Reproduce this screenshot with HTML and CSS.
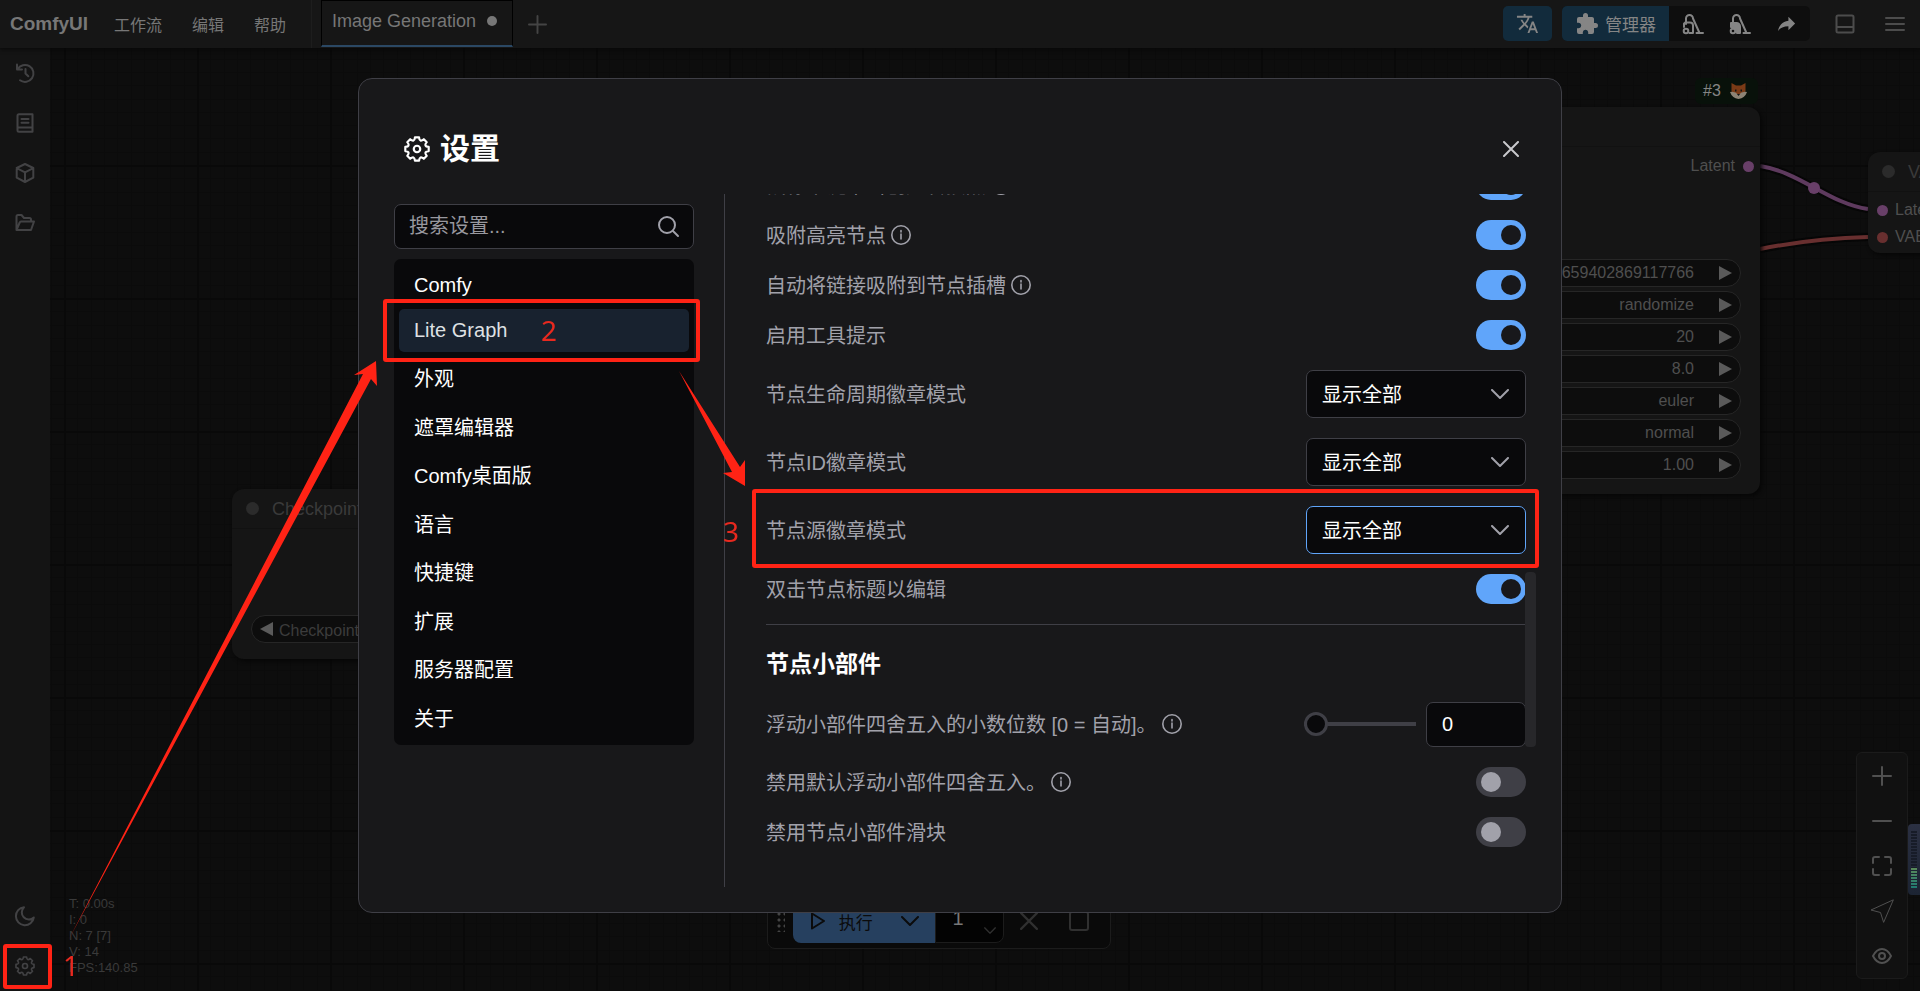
FILE: index.html
```html
<!DOCTYPE html>
<html lang="zh-CN">
<head>
    <meta charset="UTF-8">
    <meta name="viewport" content="width=device-width, initial-scale=1.0">
    <title>ComfyUI</title>
    <link rel="stylesheet" href="styles.css">
</head>
<body>
    <svg class="defs" aria-hidden="true">
        <symbol id="gear" viewBox="0 0 24 24">
            <path d="M10.1 1.2H13.9Q14.4 6.3 18.3 3L21 5.7Q17.7 9.6 22.8 10.1V13.9Q17.7 14.4 21 18.3L18.3 21Q14.4 17.7 13.9 22.8H10.1Q9.6 17.7 5.7 21L3 18.3Q6.3 14.4 1.2 13.9V10.1Q6.3 9.6 3 5.7L5.7 3Q9.6 6.3 10.1 1.2Z"/>
            <circle cx="12" cy="12" r="3"/>
        </symbol>
        <symbol id="info" viewBox="0 0 20 20">
            <circle cx="10" cy="10" r="9.2"/>
            <path d="M10 9V14M10 5.6V7"/>
        </symbol>
        <symbol id="chevron" viewBox="0 0 18 10">
            <path d="M1 1L9 9L17 1"/>
        </symbol>
        <symbol id="plus" viewBox="0 0 20 20">
            <path d="M10 1V19M1 10H19"/>
        </symbol>
        <symbol id="cross" viewBox="0 0 16 16">
            <path d="M1 1L15 15M15 1L1 15"/>
        </symbol>
    </svg>

    <div class="app">
        <header class="topbar">
            <h1 class="brand">ComfyUI</h1>
            <nav class="menu">
                <button>工作流</button>
                <button>编辑</button>
                <button>帮助</button>
            </nav>
            <div class="tabs">
                <button class="tab">Image Generation <span class="tab-dot"></span></button>
                <button class="tab-add" aria-label="新建"><svg class="icon" width="19" height="19"><use href="#plus"/></svg></button>
            </div>
            <div class="tools">
                <button class="tool-blue tool-lang" aria-label="翻译">
                    <svg class="solid" width="23" height="23" viewBox="0 0 24 24"><path d="M12.87,15.07L10.33,12.56L10.36,12.53C12.1,10.59 13.34,8.36 14.07,6H17V4H10V2H8V4H1V6H12.17C11.5,7.92 10.44,9.75 9,11.35C8.07,10.32 7.3,9.19 6.69,8H4.69C5.42,9.63 6.42,11.17 7.67,12.56L2.58,17.58L4,19L9,14L12.11,17.11L12.87,15.07M18.5,10H16.5L12,22H14L15.12,19H19.87L21,22H23L18.5,10M15.88,17L17.5,12.67L19.12,17H15.88Z"/></svg>
                </button>
                <div class="tool-group">
                    <button class="tool-blue tool-manager">
                        <svg class="solid" width="24" height="24" viewBox="0 0 24 24"><path d="M20.5,11H19V7C19,5.89 18.1,5 17,5H13V3.5A2.5,2.5 0 0,0 10.5,1A2.5,2.5 0 0,0 8,3.5V5H4A2,2 0 0,0 2,7V10.8H3.5C5,10.8 6.2,12 6.2,13.5C6.2,15 5,16.2 3.5,16.2H2V20A2,2 0 0,0 4,22H7.8V20.5C7.8,19 9,17.8 10.5,17.8C12,17.8 13.2,19 13.2,20.5V22H17A2,2 0 0,0 19,20V16H20.5A2.5,2.5 0 0,0 23,13.5A2.5,2.5 0 0,0 20.5,11Z"/></svg>
                        管理器
                    </button>
                    <button aria-label="卸载模型">
                        <svg class="icon" width="22" height="22" viewBox="0 0 22 22"><path d="M4 11V5.500A3.500 3.500 0 0 1 11 5.500L17.500 20M14.500 20H21M3 9.500H8A3 3 0 0 1 11 12.500V20H7.500M2 14V10.500"/><circle cx="4" cy="18" r="2.300"/></svg>
                    </button>
                    <button aria-label="清理缓存">
                        <svg class="icon" width="22" height="22" viewBox="0 0 22 22"><path d="M4 9V5.500A3.500 3.500 0 0 1 11 5.500L17.500 20M14.500 20H21"/><path class="fill" d="M2 10H7.500A3.500 3.500 0 0 1 11 13.500V20H8Q8 14.500 2 14Z"/><circle cx="4" cy="18" r="2.300"/></svg>
                    </button>
                    <button aria-label="分享">
                        <svg class="solid" width="23" height="23" viewBox="0 0 24 24"><path d="M21,12L14,5V9C7,10 4,15 3,20C5.5,16.5 9,14.9 14,14.9V19L21,12Z"/></svg>
                    </button>
                </div>
                <button class="tool-plain" aria-label="底部面板">
                    <svg class="icon" width="20" height="20" viewBox="0 0 20 20"><rect x="1.500" y="1.500" width="17" height="17" rx="1.500"/><path d="M2 13H18"/></svg>
                </button>
                <button class="tool-plain" aria-label="菜单">
                    <svg class="icon" width="22" height="16" viewBox="0 0 22 16"><path d="M2 2H20M2 8H20M2 14H20"/></svg>
                </button>
            </div>
        </header>

        <aside class="sidebar">
            <button aria-label="历史"><svg class="icon" width="20" height="20" viewBox="0 0 20 20"><path d="M2 1.500V6.500H7M2.600 6.200A8.500 8.500 0 1 1 5 17.300M10.500 6V10.500L13.300 13.300"/></svg></button>
            <button aria-label="节点库"><svg class="icon" width="20" height="20" viewBox="0 0 20 20"><path d="M4 1.200H17.500V18.800H4A1.500 1.500 0 0 1 2.500 17.300V2.700A1.500 1.500 0 0 1 4 1.200ZM3 14.500H17M6.500 6H13.500M6.500 9.700H13.500"/></svg></button>
            <button aria-label="模型库"><svg class="icon" width="20" height="20" viewBox="0 0 20 20"><path d="M10 1L18.300 5V14.700L10 19L1.700 14.700V5ZM1.700 5.200L10 9.300L18.300 5.200M10 9.300V19"/></svg></button>
            <button aria-label="工作流"><svg class="icon" width="20" height="20" viewBox="0 0 20 20"><path d="M1.500 17V3.500A1.500 1.500 0 0 1 3 2H6.500L9 5H14.500A1.500 1.500 0 0 1 16 6.500V8.500M1.500 17L4.700 9.500A1.500 1.500 0 0 1 6 8.500H19L16 17Z"/></svg></button>
            <span class="spacer"></span>
            <button aria-label="主题"><svg class="icon" width="20" height="20" viewBox="0 0 20 20"><path d="M9 1.200A9 9 0 1 0 18.800 11.500A7 7 0 0 1 9 1.200Z"/></svg></button>
            <button aria-label="设置"><svg class="icon" width="20" height="20"><use href="#gear"/></svg></button>
        </aside>

        <main class="canvas">
            <svg class="links" width="240" height="160" viewBox="0 0 240 160">
                <g class="link-shadow"><path d="M20 46C60 52 90 84 128 89"/><path d="M20 129C55 122 90 118 128 117"/></g>
                <path class="latent" d="M20 46C60 52 90 84 128 89"/>
                <circle class="latent-dot" cx="74" cy="68" r="6"/>
                <path class="vae" d="M20 129C55 122 90 118 128 117"/>
            </svg>

            <section class="node node-checkpoint">
                <h3><i class="dot"></i>Checkpoint加载器（简易）</h3>
                <div class="widget"><span class="arrow-left"></span>Checkpoint名称</div>
            </section>

            <div class="badge">#3
                <svg width="17" height="16" viewBox="0 0 17 16"><path fill="#7a3a16" d="M1.500 0L6 2.500H11L15.500 0V8L13 14H4L1.500 8Z"/><path fill="#8d8375" d="M0 9Q5 8 8.500 12Q12 8 17 9Q15 15 8.500 16Q2 15 0 9Z"/><path fill="#141414" d="M5 6.500H6.500V8.500H5ZM10.500 6.500H12V8.500H10.500ZM7 11H10L8.500 13Z"/></svg>
            </div>
            <section class="node node-sampler">
                <h3></h3>
                <p class="output">Latent <i class="slot slot-latent"></i></p>
                <div class="widgets">
                    <div class="widget">659402869117766<span class="arrow-right"></span></div>
                    <div class="widget">randomize<span class="arrow-right"></span></div>
                    <div class="widget">20<span class="arrow-right"></span></div>
                    <div class="widget">8.0<span class="arrow-right"></span></div>
                    <div class="widget">euler<span class="arrow-right"></span></div>
                    <div class="widget">normal<span class="arrow-right"></span></div>
                    <div class="widget">1.00<span class="arrow-right"></span></div>
                </div>
            </section>

            <section class="node node-vae">
                <h3><i class="dot"></i>VAE解码</h3>
                <p class="input"><i class="slot slot-latent"></i>Latent</p>
                <p class="input"><i class="slot slot-vae"></i>VAE</p>
            </section>

            <div class="stats">T: 0.00s<br>I: 0<br>N: 7 [7]<br>V: 14<br>FPS:140.85</div>

            <div class="run-bar">
                <span class="grip"></span>
                <button class="run">
                    <svg class="icon" width="16" height="18" viewBox="0 0 16 18"><path d="M2 1.500L14 9L2 16.500Z"/></svg>
                    执行
                    <svg class="icon run-more" width="18" height="10"><use href="#chevron"/></svg>
                </button>
                <div class="batch">
                    <input type="text" value="1" aria-label="批次数">
                    <svg class="icon" width="12" height="7"><use href="#chevron"/></svg>
                </div>
                <button class="run-icon" aria-label="取消"><svg class="icon" width="18" height="18"><use href="#cross"/></svg></button>
                <button class="run-icon" aria-label="停止"><svg class="icon" width="20" height="20" viewBox="0 0 20 20"><rect x="1" y="1" width="18" height="18" rx="2"/></svg></button>
            </div>

            <div class="zoom-bar">
                <button aria-label="放大"><svg class="icon" width="20" height="20"><use href="#plus"/></svg></button>
                <button aria-label="缩小"><svg class="icon" width="20" height="20" viewBox="0 0 20 20"><path d="M1 10H19"/></svg></button>
                <button aria-label="适应视图"><svg class="icon" width="20" height="20" viewBox="0 0 20 20"><path d="M1 7V3A2 2 0 0 1 3 1H7M13 1H17A2 2 0 0 1 19 3V7M19 13V17A2 2 0 0 1 17 19H13M7 19H3A2 2 0 0 1 1 17V13"/></svg></button>
                <button aria-label="平移"><svg class="icon thin" width="24" height="24" viewBox="0 0 24 24"><path d="M23 1L1 11L10.500 13.500L13.500 23Z"/></svg></button>
                <button aria-label="显示连线"><svg class="icon" width="20" height="16" viewBox="0 0 20 16"><path d="M1 8Q4.500 1 10 1T19 8Q15.500 15 10 15T1 8Z"/><circle cx="10" cy="8" r="3"/></svg></button>
            </div>
            <div class="meter"><span class="meter-off"></span><span class="meter-on"></span></div>
        </main>
    </div>

    <div class="overlay">
        <div class="dialog" role="dialog" aria-labelledby="dialog-title">
            <div class="dialog-header">
                <svg class="icon" width="26" height="26"><use href="#gear"/></svg>
                <h2 id="dialog-title">设置</h2>
                <button class="close" aria-label="关闭"><svg class="icon" width="16" height="16"><use href="#cross"/></svg></button>
            </div>
            <div class="dialog-body">
                <div class="side">
                    <div class="search">
                        <input type="text" placeholder="搜索设置..." aria-label="搜索设置">
                        <svg class="icon" width="21" height="21" viewBox="0 0 21 21"><circle cx="9" cy="9" r="8"/><path d="M15 15L20 20"/></svg>
                    </div>
                    <nav class="categories">
                        <button class="latin">Comfy</button>
                        <button class="latin active">Lite Graph</button>
                        <button>外观</button>
                        <button>遮罩编辑器</button>
                        <button>Comfy桌面版</button>
                        <button>语言</button>
                        <button>快捷键</button>
                        <button>扩展</button>
                        <button>服务器配置</button>
                        <button>关于</button>
                    </nav>
                </div>

                <div class="panel">
                    <div class="settings">
                        <div class="row"><label for="s0">鼠标中键单击创建转接点</label><svg class="icon info"><use href="#info"/></svg><input type="checkbox" class="toggle" id="s0" checked></div>
                        <div class="row"><label for="s1">吸附高亮节点</label><svg class="icon info"><use href="#info"/></svg><input type="checkbox" class="toggle" id="s1" checked></div>
                        <div class="row"><label for="s2">自动将链接吸附到节点插槽</label><svg class="icon info"><use href="#info"/></svg><input type="checkbox" class="toggle" id="s2" checked></div>
                        <div class="row"><label for="s3">启用工具提示</label><input type="checkbox" class="toggle" id="s3" checked></div>
                        <div class="row">
                            <label for="s4">节点生命周期徽章模式</label>
                            <div class="select"><select id="s4"><option>显示全部</option><option>无</option></select><svg class="icon" width="18" height="10"><use href="#chevron"/></svg></div>
                        </div>
                        <div class="row">
                            <label for="s5">节点ID徽章模式</label>
                            <div class="select"><select id="s5"><option>显示全部</option><option>无</option></select><svg class="icon" width="18" height="10"><use href="#chevron"/></svg></div>
                        </div>
                        <div class="row">
                            <label for="s6">节点源徽章模式</label>
                            <div class="select focused"><select id="s6"><option>显示全部</option><option>无</option></select><svg class="icon" width="18" height="10"><use href="#chevron"/></svg></div>
                        </div>
                        <div class="row"><label for="s7">双击节点标题以编辑</label><input type="checkbox" class="toggle" id="s7" checked></div>
                        <hr>
                        <h3>节点小部件</h3>
                        <div class="row">
                            <label for="s8">浮动小部件四舍五入的小数位数 [0 = 自动]。</label><svg class="icon info"><use href="#info"/></svg>
                            <div class="number">
                                <input type="range" min="0" max="6" value="0" aria-label="小数位数">
                                <input type="text" id="s8" value="0">
                            </div>
                        </div>
                        <div class="row"><label for="s9">禁用默认浮动小部件四舍五入。</label><svg class="icon info"><use href="#info"/></svg><input type="checkbox" class="toggle" id="s9"></div>
                        <div class="row"><label for="s10">禁用节点小部件滑块</label><input type="checkbox" class="toggle" id="s10"></div>
                    </div>
                    <span class="scroll-thumb"></span>
                </div>
            </div>
        </div>
    </div>

    <!-- tutorial marks -->
    <div class="marks">
        <svg width="800" height="960" viewBox="0 0 800 960">
            <path d="M69 939L363 374L354 375L376 361L377 386L371 379Z"/>
            <path d="M679 371L740 467L745 460V486L723 473L732 472Z"/>
        </svg>
        <span class="frame frame-1"></span>
        <span class="frame frame-2"></span>
        <span class="frame frame-3"></span>
        <span class="step step-1">1</span>
        <span class="step step-2">2</span>
        <span class="step step-3">3</span>
    </div>
</body>
</html>
```
FILE: styles.css
```css
* {
    box-sizing: border-box;
}

body {
    margin: 0;
    height: 100vh;
    overflow: hidden;
    background-color: #0d0d0d;
    color: #fff;
    font-family: "Liberation Sans", "Noto Sans CJK SC", sans-serif;
    font-size: 16px;
}

h1, h2, h3, p {
    margin: 0;
}

button {
    display: flex;
    align-items: center;
    justify-content: center;
    padding: 0;
    border: none;
    background: none;
    color: inherit;
    font: inherit;
    cursor: pointer;
}

input, select {
    font: inherit;
    color: inherit;
}

.defs {
    position: absolute;
    width: 0;
    height: 0;
}

.icon {
    flex: none;
    fill: none;
    stroke: currentColor;
    stroke-width: 2;
    stroke-linecap: round;
    stroke-linejoin: round;
    overflow: visible;
}

.icon.thin {
    stroke-width: 1;
}

.icon .fill,
.solid {
    fill: currentColor;
}

.app {
    display: grid;
    grid-template-columns: 50px 1fr;
    grid-template-rows: 48px 1fr;
    height: 100vh;
}

/* top bar */
.topbar {
    grid-column: 1 / 3;
    display: flex;
    align-items: center;
    background-color: #161616;
    color: #777;
    z-index: 1;
    box-shadow: 0 1px 4px #080808;
}

.brand {
    width: 104px;
    padding-left: 10px;
    font-size: 19px;
}

.menu {
    display: flex;
    gap: 30px;
    height: 100%;
    padding: 0 25px 0 10px;
    border-right: 1px solid #1d1d1d;
}

.tabs {
    display: flex;
    height: 100%;
    padding-left: 9px;
}

.tab {
    gap: 11px;
    height: 47px;
    padding: 0 15px 4px 10px;
    border: 1px solid #000;
    border-bottom: 2px solid #2b4864;
    font-size: 18px;
}

.tab-dot {
    width: 10px;
    height: 10px;
    border-radius: 50%;
    background-color: #777;
}

.tab-add {
    width: 48px;
    color: #444;
}

.tools {
    display: flex;
    align-items: center;
    margin-left: auto;
    padding: 0 5px 1px 0;
    gap: 10px;
}

.tool-blue {
    height: 35px;
    background-color: #122b3c;
    color: #858585;
}

.tool-lang {
    width: 49px;
    border-radius: 5px;
}

.tool-group {
    display: flex;
    height: 35px;
    margin-right: 5px;
    border-radius: 5px;
    overflow: hidden;
    background-color: #0e0e0e;
    color: #858585;
}

.tool-group button {
    width: 47px;
}

.tool-group .tool-manager {
    width: 107px;
    gap: 6px;
    font-size: 17px;
}

.tool-plain {
    width: 40px;
    height: 36px;
    color: #4c4c4c;
}

/* left bar */
.sidebar {
    display: flex;
    flex-direction: column;
    background-color: #141414;
    color: #424244;
}

.sidebar button {
    height: 50px;
}

.spacer {
    flex: 1;
}

/* graph canvas */
.canvas {
    position: relative;
    overflow: hidden;
    color: #4f4f4f;
    background-color: #0d0d0d;
    background-image:
        linear-gradient(to right, #090909 2px, transparent 2px),
        linear-gradient(to bottom, #090909 2px, transparent 2px),
        repeating-linear-gradient(to right, #0b0b0b 0 1px, transparent 1px 10%),
        repeating-linear-gradient(to bottom, #0b0b0b 0 1px, transparent 1px 10%);
    background-size: 133px 133px;
    background-position: 14px 117px;
}

.node {
    position: absolute;
    background-color: #151515;
    border-radius: 12px;
    box-shadow: 2px 2px 4px #060606;
}

.node h3 {
    display: flex;
    align-items: center;
    gap: 13px;
    height: 40px;
    padding-left: 14px;
    border-bottom: 1px solid #111;
    font-size: 18px;
    font-weight: normal;
    line-height: 20px;
    white-space: nowrap;
    color: #3a3a3a;
}

.dot {
    width: 13px;
    height: 13px;
    border-radius: 50%;
    background-color: #2b2b2b;
}

.slot {
    width: 11px;
    height: 11px;
    border-radius: 50%;
}

.slot-latent {
    background-color: #683f68;
}

.slot-vae {
    background-color: #682f2f;
}

.widget {
    display: flex;
    align-items: center;
    height: 28px;
    border: 1px solid #262626;
    border-radius: 14px;
    background-color: #0d0d0d;
    white-space: nowrap;
}

.arrow-left,
.arrow-right {
    border: 7px solid transparent;
}

.arrow-left {
    margin-right: 6px;
    border-left-width: 0;
    border-right: 13px solid #5a5a5a;
}

.arrow-right {
    margin-left: 25px;
    border-right-width: 0;
    border-left: 13px solid #5a5a5a;
}

.node-checkpoint {
    left: 182px;
    top: 441px;
    width: 360px;
    height: 170px;
}

.node-checkpoint .widget {
    margin: 86px 19px 0;
    padding-left: 8px;
    color: #3c3c3c;
}

.node-sampler {
    left: 1300px;
    top: 59px;
    width: 410px;
    height: 387px;
}

.output {
    display: flex;
    align-items: center;
    justify-content: flex-end;
    gap: 8px;
    height: 38px;
    padding-right: 6px;
}

.widgets {
    display: flex;
    flex-direction: column;
    gap: 4px;
    padding: 74px 19px 0;
}

.widgets .widget {
    justify-content: flex-end;
    padding-right: 8px;
}

.node-vae {
    left: 1818px;
    top: 104px;
    width: 200px;
    height: 101px;
}

.node-vae .input {
    display: flex;
    align-items: center;
    gap: 7px;
    height: 27px;
    padding: 9px 0 0 9px;
}

.badge {
    position: absolute;
    left: 1645px;
    top: 30px;
    display: flex;
    align-items: center;
    gap: 9px;
    height: 26px;
    padding: 0 11px 0 8px;
    border-radius: 6px;
    background-color: #08110a;
    color: #858585;
}

.links {
    position: absolute;
    left: 1690px;
    top: 72px;
    fill: none;
    stroke-width: 4;
}

.link-shadow {
    stroke: #060606;
    stroke-width: 8;
}

.latent {
    stroke: #5e3a5e;
}

.latent-dot {
    fill: #683f68;
}

.vae {
    stroke: #682f2f;
}

.stats {
    position: absolute;
    left: 19px;
    bottom: 15px;
    font-size: 13px;
    line-height: 16px;
    color: #3a3a3a;
}

/* queue bar */
.run-bar {
    position: absolute;
    left: 717px;
    bottom: 42px;
    display: flex;
    align-items: center;
    height: 56px;
    width: 344px;
    padding: 0 6px;
    border: 1px solid #1c1c1c;
    border-radius: 8px;
    background-color: #0a0a0a;
    color: #303030;
}

.grip {
    width: 9px;
    height: 21px;
    margin: 0 8px 0 2px;
    background-image: radial-gradient(circle, #444 1px, transparent 2px);
    background-size: 6px 6px;
}

.run {
    height: 44px;
    width: 143px;
    gap: 13px;
    border-radius: 8px 0 0 8px;
    background-color: #26405f;
    color: #0b0b0b;
    font-size: 17px;
}

.run-more {
    margin-left: 15px;
}

.batch {
    display: flex;
    align-items: flex-end;
    width: 69px;
    height: 44px;
    padding: 0 9px 8px 16px;
    border: 1px solid #1c1c1c;
    border-radius: 0 8px 8px 0;
    background-color: #030303;
}

.batch input {
    width: 32px;
    height: 32px;
    padding: 0;
    border: none;
    background: none;
    color: #777;
    font-size: 20px;
}

.run-icon {
    width: 50px;
    height: 44px;
}

.zoom-bar {
    position: absolute;
    right: 12px;
    bottom: 12px;
    display: flex;
    flex-direction: column;
    width: 52px;
    border: 1px solid #1b1b1b;
    border-radius: 6px;
    background-color: #111;
    color: #505050;
}

.zoom-bar button {
    height: 45px;
}

.meter {
    position: absolute;
    right: 0;
    bottom: 96px;
    display: flex;
    flex-direction: column;
    width: 12px;
    height: 71px;
    padding: 7px 3px;
    border-radius: 4px 0 0 4px;
    background: linear-gradient(#2b3042, #1c2433);
}

.meter-off,
.meter-on {
    height: 37px;
    background: repeating-linear-gradient(#171c28 0 2px, transparent 2px 3px);
}

.meter-on {
    height: 20px;
    background: repeating-linear-gradient(transparent 0 2px, #1c2433 2px 3px), linear-gradient(#5a8a5a, #1f7a72);
}

/* settings dialog */
.overlay {
    position: fixed;
    inset: 0;
    z-index: 2;
    display: flex;
    align-items: center;
    justify-content: center;
}

.dialog {
    padding: 0 25px 25px;
    border: 1px solid #3f3f46;
    border-radius: 14px;
    background-color: #18181a;
}

.dialog-header {
    display: flex;
    align-items: center;
    gap: 10px;
    height: 115px;
    padding: 26px 9px 0 20px;
}

.dialog-header h2 {
    font-size: 30px;
    line-height: 36px;
}

.close {
    width: 32px;
    height: 32px;
    margin-left: auto;
    color: #c8c8cc;
}

.dialog-body {
    display: flex;
    width: 60vw;
    height: 70vh;
}

.side {
    display: flex;
    flex-direction: column;
    gap: 10px;
    flex: none;
    width: 320px;
    margin-right: 20px;
    padding: 10px;
}

.search {
    display: flex;
    align-items: center;
    height: 45px;
    padding: 0 14px;
    border: 1px solid #3f3f46;
    border-radius: 7px;
    background-color: #09090b;
    color: #a1a1aa;
}

.search input {
    flex: 1;
    min-width: 0;
    padding: 0;
    border: none;
    outline: none;
    background: none;
    font-size: 20px;
}

.search input::placeholder {
    color: #98989f;
}

.categories {
    display: flex;
    flex-direction: column;
    gap: 2px;
    min-height: 486px;
    padding: 5px;
    border-radius: 7px;
    background-color: #09090b;
}

.categories button {
    flex: 1;
    justify-content: flex-start;
    padding: 2px 0 0 15px;
    border-radius: 5px;
    font-size: 20px;
}

.categories .latin {
    flex: none;
    height: 43px;
    padding-top: 0;
}

.categories .active {
    background-color: #18222f;
    color: #dfe1e4;
}

.panel {
    position: relative;
    flex: 1;
    overflow: hidden;
    padding: 0 10px 0 41px;
    border-left: 1px solid #3f3f46;
}

/* list is scrolled so that the first row is cut by the panel edge */
.settings {
    display: flex;
    flex-direction: column;
    gap: 20px;
    margin-top: -24px;
}

.row {
    display: flex;
    align-items: center;
    font-size: 20px;
    line-height: 28px;
    color: #a1a1aa;
}

.row label {
    padding-top: 2px;
}

.row > :last-child {
    margin-left: auto;
}

.info {
    width: 20px;
    height: 20px;
    margin-left: 5px;
    stroke-width: 1.6;
}

.settings hr {
    width: 100%;
    margin: 0;
    border: none;
    border-top: 1px solid #3f3f46;
}

.settings h3 {
    padding-top: 2px;
    font-size: 23px;
    line-height: 35px;
}

.toggle {
    appearance: none;
    flex: none;
    width: 50px;
    height: 30px;
    margin: 0;
    padding: 5px;
    border-radius: 15px;
    background-color: #3f3f46;
}

.toggle::before {
    content: "";
    display: block;
    width: 20px;
    height: 20px;
    border-radius: 50%;
    background-color: #a1a1aa;
}

.toggle:checked {
    background-color: #60a5fa;
}

.toggle:checked::before {
    margin-left: auto;
    background-color: #18181b;
}

.select {
    position: relative;
    width: 220px;
}

.select select {
    appearance: none;
    display: block;
    width: 100%;
    height: 48px;
    padding: 2px 15px 0;
    border: 1px solid #3f3f46;
    border-radius: 7px;
    outline: none;
    background-color: #09090b;
    color: #fff;
}

.select.focused select {
    border-color: #60a5fa;
}

.select .icon {
    position: absolute;
    right: 17px;
    top: 19px;
    color: #a1a1aa;
    pointer-events: none;
}

.number {
    display: flex;
    align-items: center;
    gap: 10px;
}

.number input[type="text"] {
    width: 100px;
    height: 45px;
    padding: 0 15px;
    border: 1px solid #3f3f46;
    border-radius: 7px;
    background-color: #09090b;
    color: #fff;
}

.number input[type="range"] {
    appearance: none;
    width: 112px;
    height: 24px;
    margin: 0;
    background: linear-gradient(#3f3f46, #3f3f46) center / 100% 4px no-repeat;
}

.number input[type="range"]::-webkit-slider-thumb {
    appearance: none;
    width: 24px;
    height: 24px;
    border: 3px solid #3f3f46;
    border-radius: 50%;
    background-color: #09090b;
}

.scroll-thumb {
    position: absolute;
    right: 0;
    top: 378px;
    width: 11px;
    height: 175px;
    border-radius: 4px;
    background-color: #27272a;
}

/* tutorial marks */
.marks {
    position: absolute;
    inset: 0;
    z-index: 3;
    pointer-events: none;
    color: #ff2315;
    fill: #ff2315;
}

.frame {
    position: absolute;
    border: 4px solid #ff2315;
    border-radius: 3px;
}

.frame-1 {
    left: 3px;
    top: 944px;
    width: 49px;
    height: 45px;
}

.frame-2 {
    left: 383px;
    top: 299px;
    width: 317px;
    height: 63px;
}

.frame-3 {
    left: 752px;
    top: 489px;
    width: 787px;
    height: 79px;
}

.step {
    position: absolute;
    font-family: "Noto Sans", sans-serif;
    font-size: 28px;
    line-height: 28px;
    color: #e8291f;
}

.step-1 {
    left: 63px;
    top: 951px;
}

.step-2 {
    left: 541px;
    top: 316px;
}

.step-3 {
    left: 723px;
    top: 517px;
}
```
